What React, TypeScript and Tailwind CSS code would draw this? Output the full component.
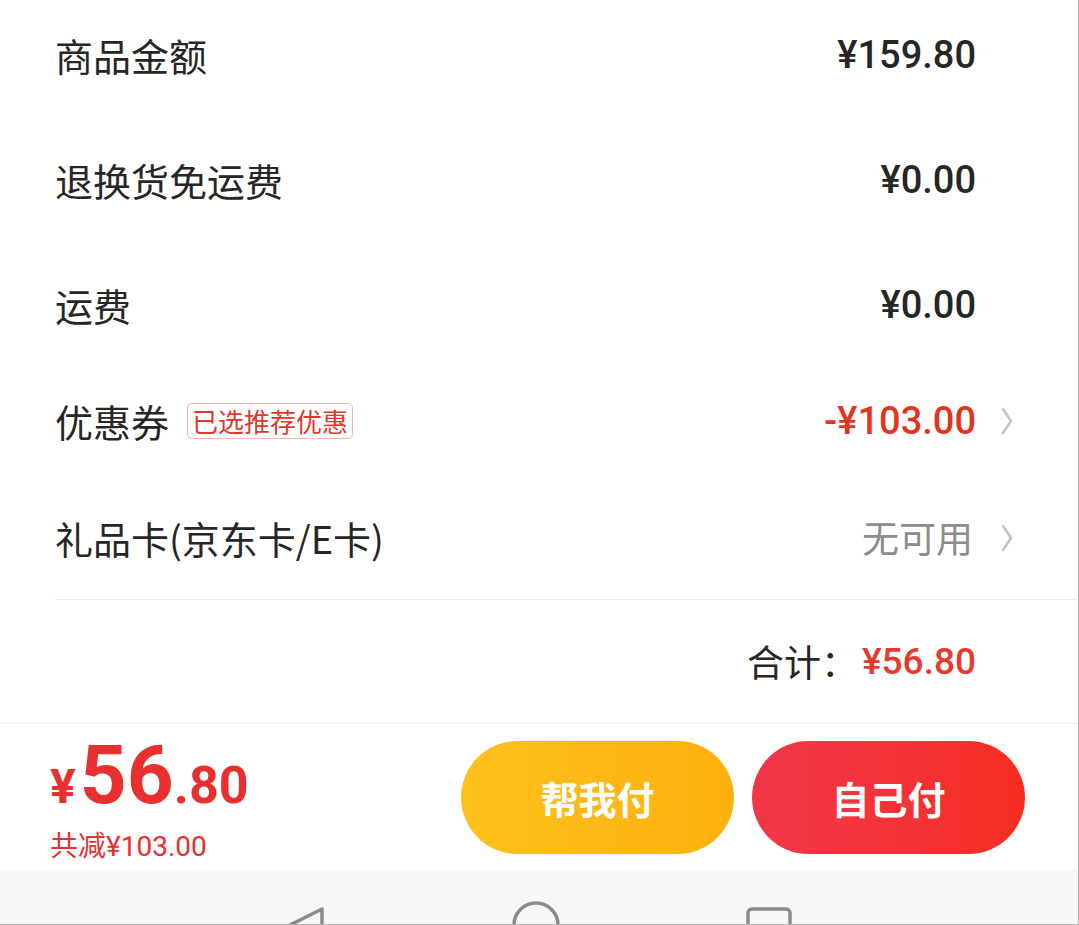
const cjk = '"Noto Sans CJK SC", "Noto Sans", sans-serif';
const num = 'Roboto, "Noto Sans CJK SC", sans-serif';

const Chevron = () => (
  <svg width="14" height="30" viewBox="0 0 14 30" className="ml-[24px] shrink-0">
    <polyline points="3,3 11,15 3,27" fill="none" stroke="#c4c4c4" strokeWidth="2.5" strokeLinecap="round" strokeLinejoin="round" />
  </svg>
);

type RowProps = {
  label: React.ReactNode;
  children: React.ReactNode;
  className?: string;
};

const Row = ({ label, children, className }: RowProps) => (
  <div className={`flex h-[50px] shrink-0 items-center justify-between pl-[55px] pr-[102px] ${className ?? ''}`}>
    <div className="flex items-center text-[38px] leading-none text-[#262626]" style={{ fontFamily: cjk }}>
      {label}
    </div>
    <div className="flex items-center">{children}</div>
  </div>
);

const Amount = ({ value }: { value: string }) => (
  <span className="text-[38px] font-medium text-[#262626]" style={{ fontFamily: num }}>
    {value}
  </span>
);

export default function App() {
  return (
    <div className="flex h-[925px] w-[1079px] flex-col overflow-hidden border-r border-[#b3b3b3] bg-white">
      <div className="shrink-0 pt-[30px]">
        <Row label="商品金额">
          <Amount value="¥159.80" />
        </Row>
        <Row label="退换货免运费" className="mt-[75px]">
          <Amount value="¥0.00" />
        </Row>
        <Row label="运费" className="mt-[75px]">
          <Amount value="¥0.00" />
        </Row>
        <Row
          label={
            <>
              <span>优惠券</span>
              <span className="ml-[18px] rounded-[5px] border border-[#f1b3ab] px-[4px] text-[26px] leading-[34px] text-[#e0362c]">
                已选推荐优惠
              </span>
            </>
          }
          className="mt-[66px] !pr-[64px]"
        >
          <span className="text-[38px] font-medium text-[#e3341f]" style={{ fontFamily: num }}>
            -¥103.00
          </span>
          <Chevron />
        </Row>
        <Row label="礼品卡(京东卡/E卡)" className="mt-[67px] !pr-[64px]">
          <span className="mr-[3px] text-[37px] text-[#8c8c8c]" style={{ fontFamily: cjk }}>
            无可用
          </span>
          <Chevron />
        </Row>
      </div>

      <div className="mt-[36px] ml-[55px] h-px shrink-0 bg-[#ececec]" />

      <div className="flex h-[123px] shrink-0 items-center justify-end pr-[102px]">
        <span className="text-[37px] text-[#262626]" style={{ fontFamily: cjk }}>
          合计：
        </span>
        <span className="ml-[4px] text-[37px] font-medium text-[#e8392f]" style={{ fontFamily: num }}>
          ¥56.80
        </span>
      </div>

      <div className="h-px shrink-0 bg-[#efefef]" />

      <div className="flex h-[146px] shrink-0 items-center justify-between pl-[50px] pr-[53px]">
        <div className="flex flex-col" style={{ fontFamily: num }}>
          <div className="flex items-baseline font-bold leading-none text-[#e8312f]">
            <span className="text-[48px]">¥</span>
            <span className="ml-[4px] text-[82px]">56</span>
            <span className="text-[52px]">.80</span>
          </div>
          <div className="mt-[14px] text-[28px] leading-none text-[#e8312f]" style={{ fontFamily: cjk }}>
            共减<span style={{ fontFamily: num }}>¥103.00</span>
          </div>
        </div>
        <div className="flex items-center gap-[18px]">
          <button
            className="flex h-[113px] w-[273px] items-center justify-center rounded-full bg-gradient-to-r from-[#fdc11d] to-[#fdb00d] text-[38px] font-bold text-white"
            style={{ fontFamily: cjk }}
          >
            帮我付
          </button>
          <button
            className="flex h-[113px] w-[273px] items-center justify-center rounded-full bg-gradient-to-r from-[#f2374a] to-[#f62d1f] text-[38px] font-bold text-white"
            style={{ fontFamily: cjk }}
          >
            自己付
          </button>
        </div>
      </div>

      <div className="flex min-h-0 flex-1 items-start justify-center gap-[185px] overflow-hidden border-b border-[#b3b3b3] bg-[#f7f7f7] pt-[35px]">
        <svg width="40" height="40" viewBox="0 0 40 40" className="shrink-0">
          <polygon points="36,4 36,36 4,20" fill="none" stroke="#8a8a8a" strokeWidth="3.5" strokeLinejoin="round" />
        </svg>
        <svg width="50" height="50" viewBox="0 0 50 50" className="-mt-[5px] shrink-0">
          <circle cx="25" cy="25" r="22" fill="none" stroke="#8a8a8a" strokeWidth="3.5" />
        </svg>
        <svg width="46" height="46" viewBox="0 0 46 46" className="shrink-0">
          <rect x="2" y="4" width="42" height="40" rx="4" fill="none" stroke="#8a8a8a" strokeWidth="3.5" />
        </svg>
      </div>
    </div>
  );
}
